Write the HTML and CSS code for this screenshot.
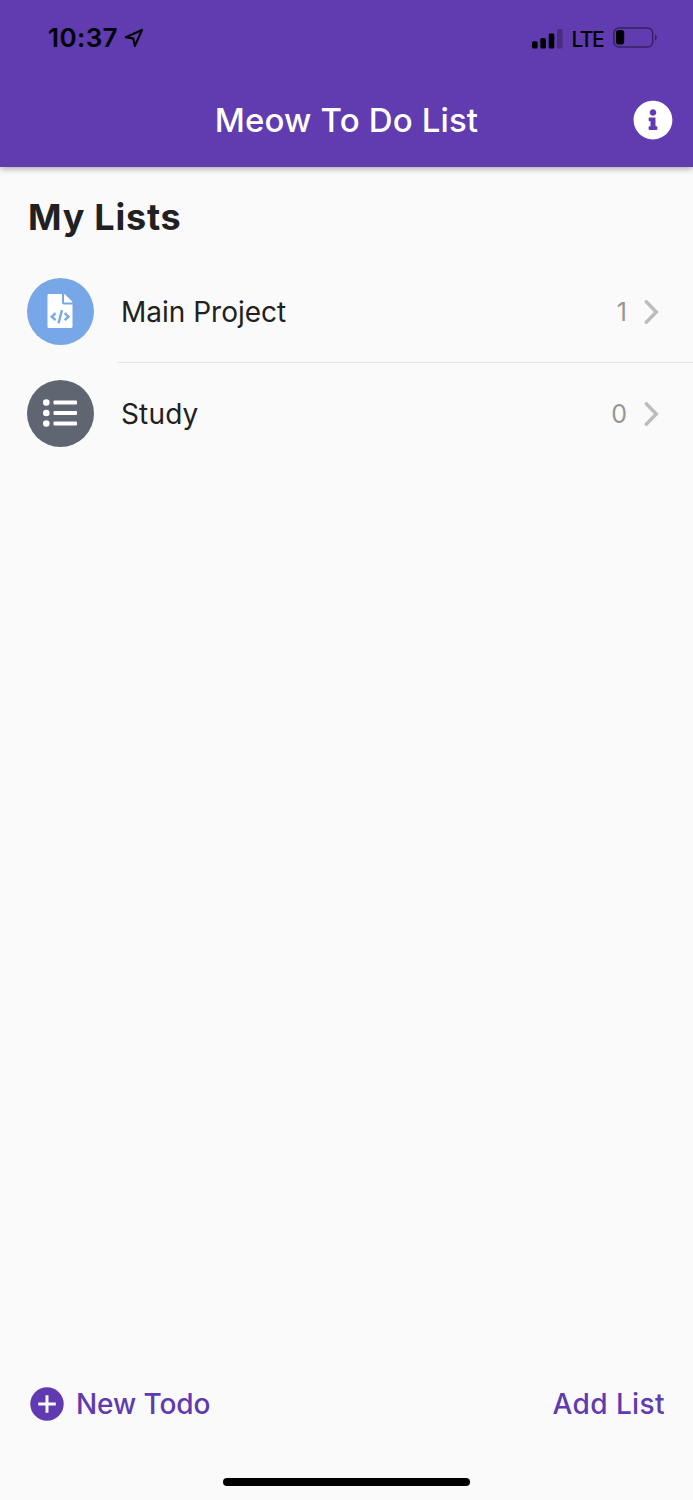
FILE: index.html
```html
<!DOCTYPE html>
<html lang="en">
<head>
<meta charset="utf-8">
<title>Meow To Do List</title>
<link rel="stylesheet" href="styles.css">
</head>
<body>
<div class="screen">
  <header class="header">
    <div class="status">
      <div class="status-left">
        <span class="time">10:37</span>
        <svg class="location" width="20" height="20" viewBox="0 0 20 20"><path d="M18 2 L1.8 9.2 L9.4 10.6 L10.8 18 Z" fill="none" stroke="#000" stroke-width="2.1" stroke-linejoin="round"/></svg>
      </div>
      <div class="status-right">
        <svg width="31" height="20" viewBox="0 0 31 20"><rect x="0" y="12.2" width="5.6" height="7.2" rx="1.5"/><rect x="8.3" y="9" width="5.6" height="10.4" rx="1.5"/><rect x="16.7" y="4.6" width="5.6" height="14.8" rx="1.5"/><rect x="25" y="0" width="5.6" height="19.4" rx="1.5" fill-opacity=".25"/></svg>
        <span class="carrier">LTE</span>
        <svg class="battery" width="44" height="22" viewBox="0 0 44 22"><rect x=".9" y="1" width="38.8" height="19" rx="5" fill="none" stroke="#000" stroke-opacity=".45" stroke-width="1.5"/><rect x="3" y="3.1" width="8.2" height="14.5" rx="2.8"/><path d="M42 7.2 Q43.8 8.4 43.8 10.5 Q43.8 12.6 42 13.8 Z" fill-opacity=".45"/></svg>
      </div>
    </div>
    <div class="appbar">
      <h1 class="title">Meow To Do List</h1>
      <svg class="info" width="40" height="40" viewBox="0 0 512 512"><path fill="#fff" d="M256 8C119.043 8 8 119.083 8 256c0 136.997 111.043 248 248 248s248-111.003 248-248C504 119.083 392.957 8 256 8zm0 110c23.196 0 42 18.804 42 42s-18.804 42-42 42-42-18.804-42-42 18.804-42 42-42zm56 254c0 6.627-5.373 12-12 12h-88c-6.627 0-12-5.373-12-12v-24c0-6.627 5.373-12 12-12h12v-64h-12c-6.627 0-12-5.373-12-12v-24c0-6.627 5.373-12 12-12h64c6.627 0 12 5.373 12 12v100h12c6.627 0 12 5.373 12 12v24z"/></svg>
    </div>
  </header>
  <main class="content">
    <h2 class="heading">My Lists</h2>
    <ul class="lists">
      <li class="row">
        <span class="badge badge-blue"><svg width="26" height="34" viewBox="0 0 26 34"><path fill="#fff" d="M1.6 0H15v8.8q0 1.7 1.7 1.7H25.5v21.9Q25.5 34 24 34H1.6Q.5 34 .5 32.4V1.6Q.5 0 1.6 0Z"/><path fill="#fff" d="M17 .1q.6 0 1.1.5l6.8 6.6q.6.6.6 1.2H17Z"/><path d="M8.6 19.2 4.8 22.7l3.8 3.5M17.7 19.2l3.8 3.5-3.8 3.5M15 16 11.5 29.2" fill="none" stroke="#78a7e8" stroke-width="2.4"/></svg></span>
        <div class="row-body row-divided"><span class="name">Main Project</span><span class="count">1</span><svg class="chevron" width="15" height="26" viewBox="0 0 15 26"><path d="M2.3 2.7 12.3 13 2.3 23.3" fill="none" stroke="#bcbcbc" stroke-width="3.4" stroke-linecap="round"/></svg></div>
      </li>
      <li class="row">
        <span class="badge badge-gray"><svg width="34" height="28" viewBox="0 0 34 28"><g fill="#fff"><circle cx="3.3" cy="3.5" r="3.3"/><circle cx="3.3" cy="14" r="3.3"/><circle cx="3.3" cy="24.5" r="3.3"/><rect x="10.5" y="1.4" width="23.5" height="4.2" rx="1"/><rect x="10.5" y="11.9" width="23.5" height="4.2" rx="1"/><rect x="10.5" y="22.4" width="23.5" height="4.2" rx="1"/></g></svg></span>
        <div class="row-body"><span class="name name-short">Study</span><span class="count">0</span><svg class="chevron" width="15" height="26" viewBox="0 0 15 26"><path d="M2.3 2.7 12.3 13 2.3 23.3" fill="none" stroke="#bcbcbc" stroke-width="3.4" stroke-linecap="round"/></svg></div>
      </li>
    </ul>
  </main>
  <footer class="toolbar">
    <div class="action">
      <svg width="34" height="34" viewBox="0 0 34 34"><circle cx="17" cy="17" r="16.7" fill="#5f3ab0"/><path d="M17 8.2V25.8M8.2 17H25.8" stroke="#fafafa" stroke-width="3"/></svg>
      <span class="new-todo">New Todo</span>
    </div>
    <span class="add-list">Add List</span>
  </footer>
  <div class="home-area"><div class="home-bar"></div></div>
</div>
</body>
</html>
```
FILE: styles.css
```css
* { box-sizing: border-box; }
body { margin: 0; background: #fafafa; font-family: Inter, "Liberation Sans", sans-serif; color: #212121; }
.screen { width: 693px; height: 1500px; display: flex; flex-direction: column; overflow: hidden; }
.header { height: 167px; flex: none; background: #613bb0; box-shadow: 0 1px 7px rgba(0,0,0,.4); }
.status { height: 76px; display: flex; justify-content: space-between; align-items: center; padding: 0 36px 0 48px; color: #000; }
.status-left, .status-right { display: flex; align-items: center; }
.time { font-size: 26px; font-weight: 600; line-height: 32px; letter-spacing: .4px; }
.location { margin-left: 6px; }
.carrier { font-size: 21px; font-weight: 500; line-height: 28px; letter-spacing: -1.6px; margin: 3px 0 0 9px; }
.battery { margin-left: 10px; }
.status-right svg:first-child { margin-top: 1px; }
.appbar { height: 89px; display: grid; grid-template-columns: 60px 1fr 60px; align-items: center; }
.title { grid-column: 2; margin: 0 0 1px; text-align: center; font-size: 33px; line-height: 40px; font-weight: 500; letter-spacing: .15px; color: #fff; }
.info { justify-self: start; margin: 0 0 1px -.5px; }
.content { flex: 1; }
.heading { margin: 28px 0 20px 28px; font-size: 36px; line-height: 45px; font-weight: 700; letter-spacing: .75px; }
.lists { margin: 0; padding: 0; list-style: none; }
.row { height: 102px; display: flex; align-items: center; padding-left: 27px; }
.badge { width: 67px; height: 67px; border-radius: 50%; display: flex; align-items: center; justify-content: center; }
.badge svg { margin-right: 1px; }
.row-body { flex: 1; height: 103px; margin: 1px 0 0 23px; padding: 1px 34px 0 4px; display: flex; align-items: center; border-bottom: 1px solid transparent; }
.badge-blue { background: #78a7e8; }
.badge-gray { background: #5f6672; }
.row-divided { border-bottom-color: #e4e4e4; }
.name { flex: 1; font-size: 28px; line-height: 36px; letter-spacing: 0; }
.name-short { letter-spacing: .15px; }
.count { font-size: 25px; line-height: 32px; color: #969696; margin-right: 17px; }
.toolbar { height: 72px; flex: none; display: flex; align-items: center; justify-content: space-between; padding: 0 28px 0 30px; color: #5f3ab0; font-size: 28px; line-height: 36px; font-weight: 500; }
.action { display: flex; align-items: center; gap: 12px; }
.new-todo { letter-spacing: -.1px; }
.add-list { letter-spacing: .4px; }
.home-area { height: 60px; flex: none; display: flex; justify-content: center; padding-top: 38px; }
.home-bar { width: 247px; height: 8px; border-radius: 5px; background: #000; }
```
